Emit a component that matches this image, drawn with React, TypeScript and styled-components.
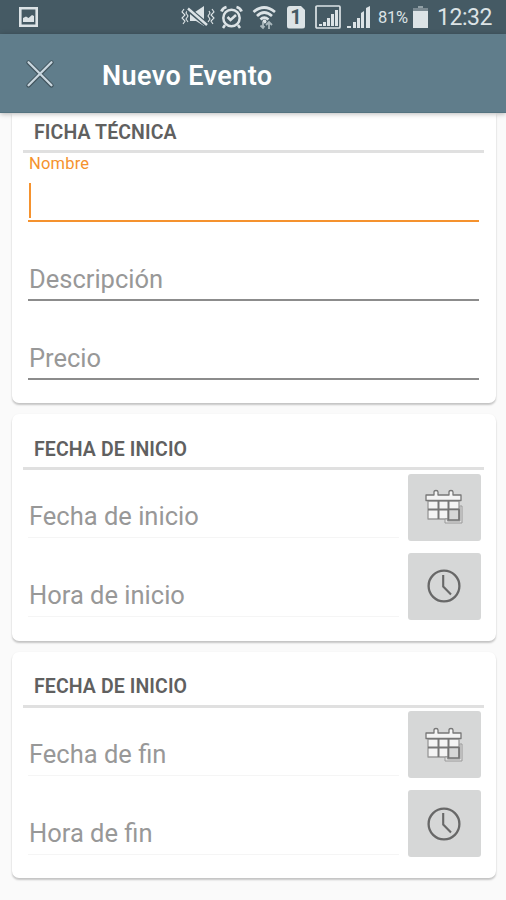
import React from "react";
import styled, { createGlobalStyle } from "styled-components";

const GlobalStyle = createGlobalStyle`
  * { box-sizing: border-box; }
  body { margin: 0; background: #fafafa; font-family: Roboto, "Noto Sans", sans-serif; }
  svg { display: block; flex: none; }
`;

const Screen = styled.main`
  display: flex;
  flex-direction: column;
  width: 506px;
  height: 900px;
  overflow: hidden;
  background: #fafafa;
`;

const StatusBar = styled.header`
  display: flex;
  align-items: center;
  justify-content: space-between;
  flex: none;
  height: 34px;
  padding: 0 15px 0 18px;
  background: #455a64;
  color: #dce3e6;
`;

const StatusIcons = styled.div`
  display: flex;
  align-items: center;
  height: 34px;
`;

const Battery = styled.span`
  width: 35px;
  margin-left: 7px;
  padding-top: 1px;
  font-size: 16.5px;
  line-height: 34px;
  letter-spacing: -0.3px;
  white-space: nowrap;
`;

const Clock = styled.time`
  width: 54px;
  margin-left: 9px;
  padding-top: 1px;
  font-size: 23px;
  line-height: 34px;
  letter-spacing: -0.45px;
  white-space: nowrap;
`;

const AppBar = styled.header`
  display: flex;
  align-items: center;
  flex: none;
  height: 79px;
  padding: 0 25px;
  background: #607d8b;
  border-bottom: 1px solid #547380;
  box-shadow: 0 1px 5px rgba(0, 0, 0, 0.28);
  z-index: 1;
`;

const CloseButton = styled.button`
  display: flex;
  width: 30px;
  margin-top: 1px;
  padding: 0;
  border: 0;
  background: none;
`;

const PageTitle = styled.h1`
  margin: 5px 0 0 47px;
  color: #fff;
  font-size: 27px;
  font-weight: 600;
  line-height: 36px;
  letter-spacing: 0.4px;
  white-space: nowrap;
`;

const Form = styled.form`
  display: flex;
  flex-direction: column;
  gap: 11px;
  padding: 0 10px 0 12px;
`;

const Card = styled.section<{ $scrolled?: boolean }>`
  height: ${(p) => (p.$scrolled ? 290 : 226.5)}px;
  padding: ${(p) => (p.$scrolled ? 0 : 16)}px 12px 0 11px;
  background: #fff;
  border-radius: ${(p) => (p.$scrolled ? "0 0 7px 7px" : "7px")};
  box-shadow: 0 2px 2px rgba(0, 0, 0, 0.21), 0 0 2px rgba(0, 0, 0, 0.04);
`;

const SectionTitle = styled.h2`
  height: 40px;
  margin: 0;
  padding: 7.5px 0 0 11px;
  border-bottom: 3px solid #e0e0e0;
  color: #606060;
  font-size: 19.5px;
  font-weight: 600;
  line-height: 24px;
  letter-spacing: 0.1px;
`;

const Fields = styled.div`
  display: flex;
  flex-direction: column;
  padding: 0 5px;
`;

const ActiveField = styled.label`
  display: block;
  height: 69px;
  padding-left: 1px;
  border-bottom: 2px solid #f5922e;
  color: #f5922e;
  font-size: 16.5px;
  line-height: 21px;
  letter-spacing: 0.2px;
`;

const Caret = styled.span`
  display: block;
  width: 2px;
  height: 35px;
  margin-top: 9px;
  background: #f5922e;
`;

const Field = styled.label<{ $quiet?: boolean }>`
  display: flex;
  align-items: flex-end;
  height: 79px;
  padding: 0 0 ${(p) => (p.$quiet ? 5 : 4)}px 1px;
  border-bottom: ${(p) => (p.$quiet ? "1px solid #f5f5f5" : "2px solid #8c8c8c")};
  color: #989898;
  font-size: 25.5px;
  line-height: 32px;
  white-space: nowrap;
`;

const PickerRow = styled.div`
  display: grid;
  grid-template-columns: 371px 74px;
  gap: 8.5px;
  height: 79px;
  padding-left: 5px;
  ${Field} {
    height: 68px;
  }
`;

const PickerButton = styled.button`
  display: flex;
  align-items: center;
  justify-content: center;
  width: 73.5px;
  height: 67px;
  margin: 3.5px 0 0;
  padding: 0;
  border: 0;
  border-radius: 3px;
  background: #d6d7d7;
`;

const ImageIcon = () => (
  <svg width="21" height="22" viewBox="0 0 21 22" fill="none" stroke="#dce3e6" strokeWidth="2.6">
    <path d="M2.3 2.3H18.7V19.7H2.3Z" />
    <path d="M5 16V12L8 10.5L10.5 12L14 9L16 10V16Z" fill="#dce3e6" stroke="none" />
  </svg>
);

const MuteIcon = () => (
  <svg width="34" height="24" viewBox="0 0 34 24" fill="none" stroke="#dce3e6">
    <path d="M3 4L1 7L4 10L1 13L4 16L2 19M6 6L5 8L7 11L5 14L7 17M31 4L33 7L30 10L33 13L30 16L32 19M28 6L29 8L27 11L29 14L27 17" strokeWidth="1.1" />
    <path d="M9 7H14L23 1V21L15 16H9Z" fill="#dce3e6" stroke="none" />
    <path d="M7 4L26 20" stroke="#455a64" strokeWidth="5" />
    <path d="M7 3.5L26 20" strokeWidth="2.4" />
  </svg>
);

const AlarmIcon = () => (
  <svg width="23" height="24" viewBox="0 0 23 24" fill="none" stroke="#dce3e6" strokeWidth="2.5">
    <circle cx="11.5" cy="13" r="8.2" />
    <path d="M7.5 12L10.5 15L16 10M5 20L3 23M18 20L20 23" />
    <path d="M1.5 6.5Q2.5 3 6.5 2M16.5 2Q20.5 3 21.5 6.5" strokeWidth="2.8" />
  </svg>
);

const WifiIcon = () => (
  <svg width="25" height="25" viewBox="0 0 25 25" fill="none" stroke="#dce3e6" strokeWidth="2.7">
    <path d="M1.5 7Q12 -2 23 7M5 11Q12 4 20 11M8.5 14.5Q12 11 16.5 14.5" />
    <circle cx="12.5" cy="16.5" r="2" fill="#dce3e6" stroke="none" />
    <path d="M11 17V23M8.5 20.5L11 23L12.5 21M17 24V17M14 20L17 17L20 20" strokeWidth="1.8" stroke="#aab8bd" />
  </svg>
);

const SimBadge = styled.span`
  display: flex;
  align-items: center;
  justify-content: center;
  width: 18px;
  height: 23px;
  margin-left: 10px;
  border-radius: 3px;
  background: #dce3e6;
  clip-path: polygon(0 0, 75% 0, 100% 20%, 100% 100%, 0 100%);
  color: #455a64;
  font-size: 20px;
  font-weight: 700;
`;

const Gap = styled.span<{ $size: number }>`
  width: ${(p) => p.$size}px;
`;

const FramedSignalIcon = () => (
  <svg width="26" height="24" viewBox="0 0 26 24" fill="#dce3e6">
    <rect x="1" y="1" width="24" height="22" rx="1" fill="none" stroke="#dce3e6" strokeWidth="1.7" />
    <path d="M4 21V19H7V21ZM8 21V17H11V21ZM12 21V13H15V21ZM16 21V9H19V21ZM20 21V5H23V21Z" />
  </svg>
);

const SignalIcon = () => (
  <svg width="24" height="23" viewBox="0 0 24 23" fill="#dce3e6">
    <path d="M0 22V20H4V22ZM6 22V16H9V22ZM10 22V12H13V22ZM14 22V7L17 5V22ZM19 22V2L23 0V22Z" />
  </svg>
);

const BatteryIcon = () => (
  <svg width="15" height="22" viewBox="0 0 15 22" fill="#dce3e6">
    <path d="M5 0H10V2H5Z" opacity=".5" />
    <path d="M0 5H15V22H0Z" />
    <path d="M0 2H15V5H0Z" opacity=".35" />
  </svg>
);

const CloseIcon = () => (
  <svg width="30" height="30" viewBox="0 0 30 30" fill="none" strokeLinecap="round">
    <path d="M3.5 3.5L26.5 26.5M26.5 3.5L3.5 26.5" stroke="#40535c" strokeWidth="4.4" />
    <path d="M3.5 3.2L26.5 26.2M26.5 3.2L3.5 26.2" stroke="#c9d7df" strokeWidth="2.3" />
  </svg>
);

const CalendarIcon = () => (
  <svg width="38" height="36" viewBox="0 0 38 36" fill="#f4f4f4" stroke="#777" strokeWidth="1.3" strokeLinejoin="round">
    <path d="M3 12H34V30H3Z" stroke="#999" />
    <path d="M3 20.5H34M13.5 12V30M23.5 12V30" fill="none" strokeWidth="2" />
    <path d="M1 6H9V3Q9 1.5 11 1.5Q13 1.5 13 3V6H24V3Q24 1.5 26 1.5Q28 1.5 28 3V6H36V11.5H1Z" />
    <path d="M34.5 17H37V34H20V30H22.5V32H35V18Z" fill="#e1e1e1" stroke="#999" strokeWidth="1" />
    <path d="M23.5 20.5H34V31H23.5Z" fill="#d6d7d7" stroke="#737373" strokeWidth="1.7" />
  </svg>
);

const ClockIcon = () => (
  <svg width="36" height="36" viewBox="0 0 36 36" fill="none" stroke="#686868" strokeWidth="2.3">
    <circle cx="18" cy="18" r="15.4" />
    <path d="M17.2 7V18.5L25 26.5" strokeWidth="2.1" />
  </svg>
);

interface PeriodProps {
  dateLabel: string;
  timeLabel: string;
}

const PeriodCard = ({ dateLabel, timeLabel }: PeriodProps) => (
  <Card>
    <SectionTitle>FECHA DE INICIO</SectionTitle>
    <PickerRow>
      <Field $quiet>{dateLabel}</Field>
      <PickerButton type="button" aria-label={dateLabel}><CalendarIcon /></PickerButton>
    </PickerRow>
    <PickerRow>
      <Field $quiet>{timeLabel}</Field>
      <PickerButton type="button" aria-label={timeLabel}><ClockIcon /></PickerButton>
    </PickerRow>
  </Card>
);

export default function App() {
  return (
    <>
      <GlobalStyle />
      <Screen>
        <StatusBar>
          <ImageIcon />
          <StatusIcons>
            <MuteIcon />
            <Gap $size={5} />
            <AlarmIcon />
            <Gap $size={9} />
            <WifiIcon />
            <SimBadge>1</SimBadge>
            <Gap $size={10} />
            <FramedSignalIcon />
            <Gap $size={6} />
            <SignalIcon />
            <Battery>81%</Battery>
            <BatteryIcon />
            <Clock>12:32</Clock>
          </StatusIcons>
        </StatusBar>
        <AppBar>
          <CloseButton aria-label="Cerrar"><CloseIcon /></CloseButton>
          <PageTitle>Nuevo Evento</PageTitle>
        </AppBar>
        <Form>
          <Card $scrolled>
            <SectionTitle>FICHA TÉCNICA</SectionTitle>
            <Fields>
              <ActiveField>Nombre<Caret /></ActiveField>
              <Field>Descripción</Field>
              <Field>Precio</Field>
            </Fields>
          </Card>
          <PeriodCard dateLabel="Fecha de inicio" timeLabel="Hora de inicio" />
          <PeriodCard dateLabel="Fecha de fin" timeLabel="Hora de fin" />
        </Form>
      </Screen>
    </>
  );
}
